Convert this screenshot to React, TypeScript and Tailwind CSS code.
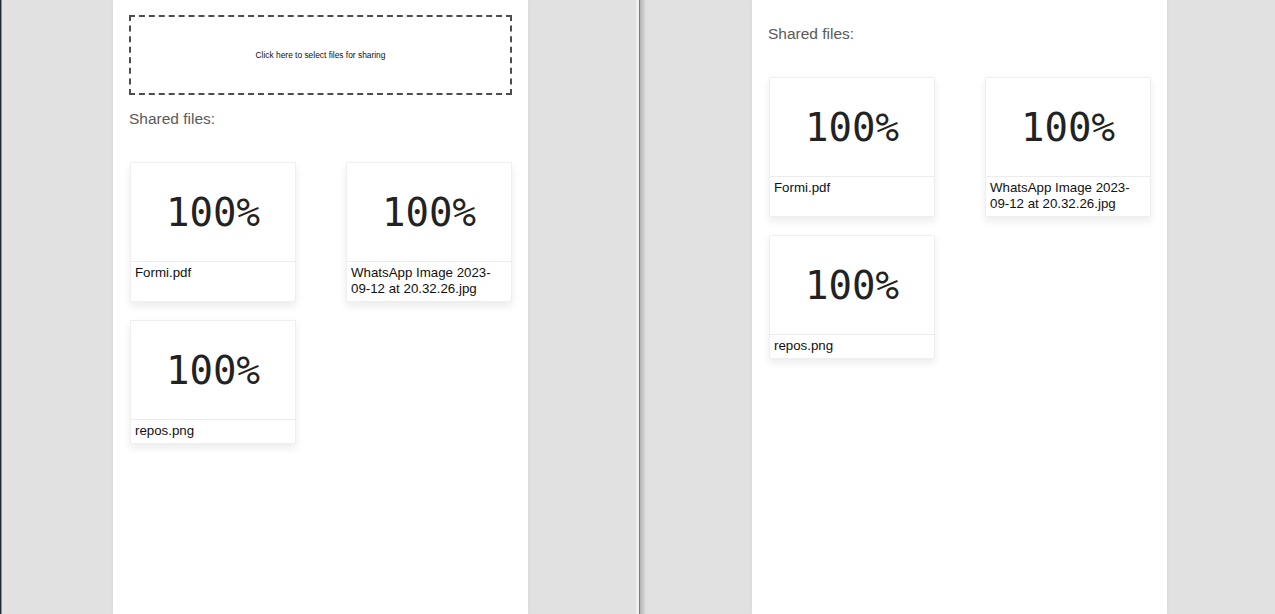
import React from "react";

type SharedFile = { name: string; progress: number };

const files: SharedFile[] = [
  { name: "Formi.pdf", progress: 100 },
  { name: "WhatsApp Image 2023-09-12 at 20.32.26.jpg", progress: 100 },
  { name: "repos.png", progress: 100 },
];

function FileCard({ file }: { file: SharedFile }) {
  return (
    <div className="flex flex-col bg-white border border-[#efefef] shadow-[0_4px_8px_rgba(0,0,0,0.08)]">
      <div className="h-[99px] flex items-center justify-center border-b border-[#ececec]">
        <span className="text-[39px] leading-none text-[#222] font-['DejaVu_Sans_Mono',monospace]">
          {file.progress}%
        </span>
      </div>
      <p className="px-[4px] pt-[3px] pb-[4px] text-[13.3px] leading-4 text-[#111] break-words">
        {file.name}
      </p>
    </div>
  );
}

function FileGrid() {
  return (
    <div className="grid grid-cols-[166px_166px] justify-between gap-y-[18px] pl-px">
      {files.map((f) => (
        <FileCard key={f.name} file={f} />
      ))}
    </div>
  );
}

function Window({ withUpload, className }: { withUpload?: boolean; className?: string }) {
  return (
    <div className={"h-full w-[634px] shrink-0 bg-[#e1e1e1] pl-[111px] " + (className ?? "")}>
      <div
        className={
          "h-full w-[415px] bg-white px-4 shadow-[0_0_4px_rgba(0,0,0,0.05)] " +
          (withUpload ? "pt-[15px]" : "pt-[25px]")
        }
      >
        {withUpload && (
          <div className="h-[80px] mb-[15px] flex items-center justify-center border-2 border-dashed border-[#4d4d4d] cursor-pointer">
            <span className="text-[8.4px] text-[#111]">Click here to select files for sharing</span>
          </div>
        )}
        <h2 className="text-[15.5px] leading-[18px] text-[#5a5a5a] mb-[34px]">Shared files:</h2>
        <FileGrid />
      </div>
    </div>
  );
}

export default function App() {
  return (
    <div className="flex h-[614px] w-[1275px] overflow-hidden bg-[#e1e1e1] font-['Liberation_Sans',Arial,sans-serif]">
      <div className="w-px shrink-0 bg-[#1f2a36]" />
      <div className="w-px shrink-0 bg-[#8a9099]" />
      <Window withUpload />
      <div className="w-[3px] shrink-0 bg-[#efefef]" />
      <div className="w-px shrink-0 bg-[#7c7c7c]" />
      <div className="relative flex-1 flex">
        <div className="absolute left-0 top-0 h-full w-[6px] bg-gradient-to-r from-[#b2b2b2] to-[#e1e1e1]" />
        <Window className="ml-px" />
      </div>
    </div>
  );
}
